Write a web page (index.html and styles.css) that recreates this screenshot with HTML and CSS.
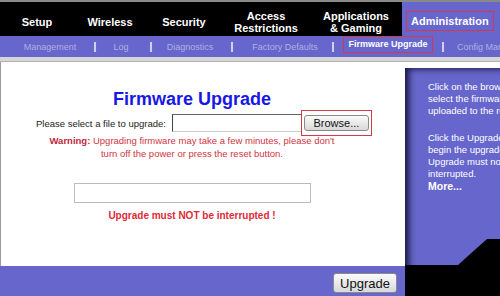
FILE: index.html
```html
<!DOCTYPE html>
<html lang="en">
<head>
  <meta charset="UTF-8">
  <title>Firmware Upgrade</title>
  <link rel="stylesheet" href="styles.css">
</head>
<body>
<div class="page">

  <div class="tabs">
    <div class="tab">Setup</div>
    <div class="tab">Wireless</div>
    <div class="tab">Security</div>
    <div class="tab">Access<br>Restrictions</div>
    <div class="tab">Applications<br>&amp; Gaming</div>
    <div class="tab tab-active"><span class="mark">Administration</span></div>
  </div>

  <div class="subnav">
    <span class="sub">Management</span>
    <span class="sep">|</span>
    <span class="sub">Log</span>
    <span class="sep">|</span>
    <span class="sub">Diagnostics</span>
    <span class="sep">|</span>
    <span class="sub">Factory Defaults</span>
    <span class="sep">|</span>
    <span class="sub sub-active">Firmware Upgrade</span>
    <span class="sep">|</span>
    <span class="sub sub-last">Config Management</span>
  </div>

  <div class="rule"></div>

  <div class="main">
    <div class="left">
      <div class="content">
        <h1>Firmware Upgrade</h1>
        <div class="file-row">
          <span class="label">Please select a file to upgrade:</span>
          <div class="file-input"></div>
          <span class="browse-mark"><button class="btn btn-browse">Browse...</button></span>
        </div>
        <p class="warning"><b>Warning:</b> Upgrading firmware may take a few minutes, please don't<br>turn off the power or press the reset button.</p>
        <div class="progress"></div>
        <p class="alert">Upgrade must NOT be interrupted !</p>
      </div>
      <div class="actions">
        <button class="btn btn-upgrade">Upgrade</button>
      </div>
    </div>

    <div class="side">
      <div class="help">
        <p>Click on the browse button to<br>select the firmware file to be<br>uploaded to the router.</p>
        <p>Click the Upgrade button to<br>begin the upgrade process.<br>Upgrade must not be<br>interrupted.<br><span class="more">More...</span></p>
      </div>
      <svg class="side-foot" width="155" height="57" viewBox="0 0 155 57">
        <polygon points="0,26 53,26 82,0 155,0 155,57 0,57" fill="#000"/>
      </svg>
    </div>
  </div>

</div>
</body>
</html>
```

FILE: styles.css
```css
body {
  margin: 0;
  padding: 0;
  background: #fff;
  font-family: "Liberation Sans", Arial, sans-serif;
  overflow: hidden;
}

.page {
  width: 560px;
  height: 296px;
  display: flex;
  flex-direction: column;
}

/* Top tabs */
.tabs {
  display: grid;
  grid-template-columns: 74px 72px 76px 88px 92px 1fr;
  height: 34px;
  border-top: 2px solid #8a8a8a;
  background: #000;
  color: #fff;
  font-size: 11px;
  font-weight: bold;
  line-height: 12.5px;
}

.tab {
  display: flex;
  align-items: center;
  justify-content: center;
  text-align: center;
  padding-top: 6px;
}

.tab-active {
  background: #6666cc;
  justify-content: flex-start;
  padding: 4px 0 0 4px;
}

.mark {
  border: 1px solid #d03a4a;
  padding: 3px 4px 2px;
}

/* Sub navigation */
.subnav {
  display: grid;
  grid-template-columns: 80px 10px 42px 18px 60px 24px 82px 14px 96px 14px 1fr;
  padding-left: 10px;
  height: 21px;
  background: #6666cc;
  align-items: center;
  justify-items: center;
  font-size: 9px;
  color: #b0b0e2;
}

.sep {
  color: #fff;
  font-weight: bold;
  font-size: 10px;
}

.sub-active {
  align-self: start;
  color: #fff;
  font-weight: bold;
  border: 1px solid #d03a4a;
  padding: 0 4px;
  line-height: 15px;
}

.sub-last {
  justify-self: start;
  padding-left: 7px;
  white-space: nowrap;
}

.rule {
  height: 4px;
  background: #d6d6d6;
  border-bottom: 1px solid #b0b0b0;
}

/* Main area */
.main {
  flex: 1;
  display: flex;
}

.left {
  width: 405px;
  display: flex;
  flex-direction: column;
}

.content {
  flex: 1;
  border-left: 1px solid #9a9a9a;
  padding-right: 22px;
  display: flex;
  flex-direction: column;
  align-items: center;
}

h1 {
  margin: 27px 0 0;
  font-size: 18px;
  line-height: 21px;
  color: #1818e6;
}

.file-row {
  align-self: stretch;
  display: flex;
  align-items: center;
  height: 26px;
  padding-left: 35px;
}

.label {
  font-size: 9.5px;
  color: #222;
}

.file-input {
  width: 128px;
  height: 16px;
  margin-left: 6px;
  border: 1px solid;
  border-color: #666 #ccc #ccc #444;
  background: #fff;
}

.browse-mark {
  margin-left: -1px;
  border: 1px solid #d03a4a;
  padding: 4px 2px;
}

.btn {
  font-family: "Liberation Sans", Arial, sans-serif;
  color: #111;
  background: linear-gradient(#fbfbfb, #d8d8d8);
  border: 1px solid #8a8a8a;
  border-radius: 3px;
  padding: 0;
}

.btn-browse {
  display: block;
  width: 65px;
  height: 16px;
  font-size: 11px;
}

.warning {
  margin: -2px 0 0;
  font-size: 9.5px;
  line-height: 13px;
  text-align: center;
  color: #d23444;
}

.warning b {
  color: #c0283a;
}

.progress {
  width: 235px;
  height: 18px;
  margin-top: 23px;
  border: 1px solid #bbb;
}

.alert {
  margin: 6px 0 0;
  font-size: 10px;
  font-weight: bold;
  line-height: 13px;
  color: #de2a38;
}

.actions {
  height: 30px;
  background: #6666cc;
  display: flex;
  justify-content: flex-end;
  align-items: center;
  padding: 4px 8px 0 0;
  box-sizing: border-box;
}

.btn-upgrade {
  width: 64px;
  height: 20px;
  font-size: 13px;
}

/* Help column */
.side {
  width: 155px;
  margin-top: 6px;
  background: #6666cc;
  box-shadow: inset 7px 4px 6px -3px rgba(10, 10, 40, 0.85);
  display: flex;
  flex-direction: column;
}

.help {
  flex: 1;
  padding: 13px 0 0 23px;
  color: #fff;
  font-size: 9.5px;
  line-height: 12px;
  white-space: nowrap;
}

.help p {
  margin: 0 0 15px;
}

.more {
  font-weight: bold;
  font-size: 10.5px;
}

.side-foot {
  display: block;
}
```
